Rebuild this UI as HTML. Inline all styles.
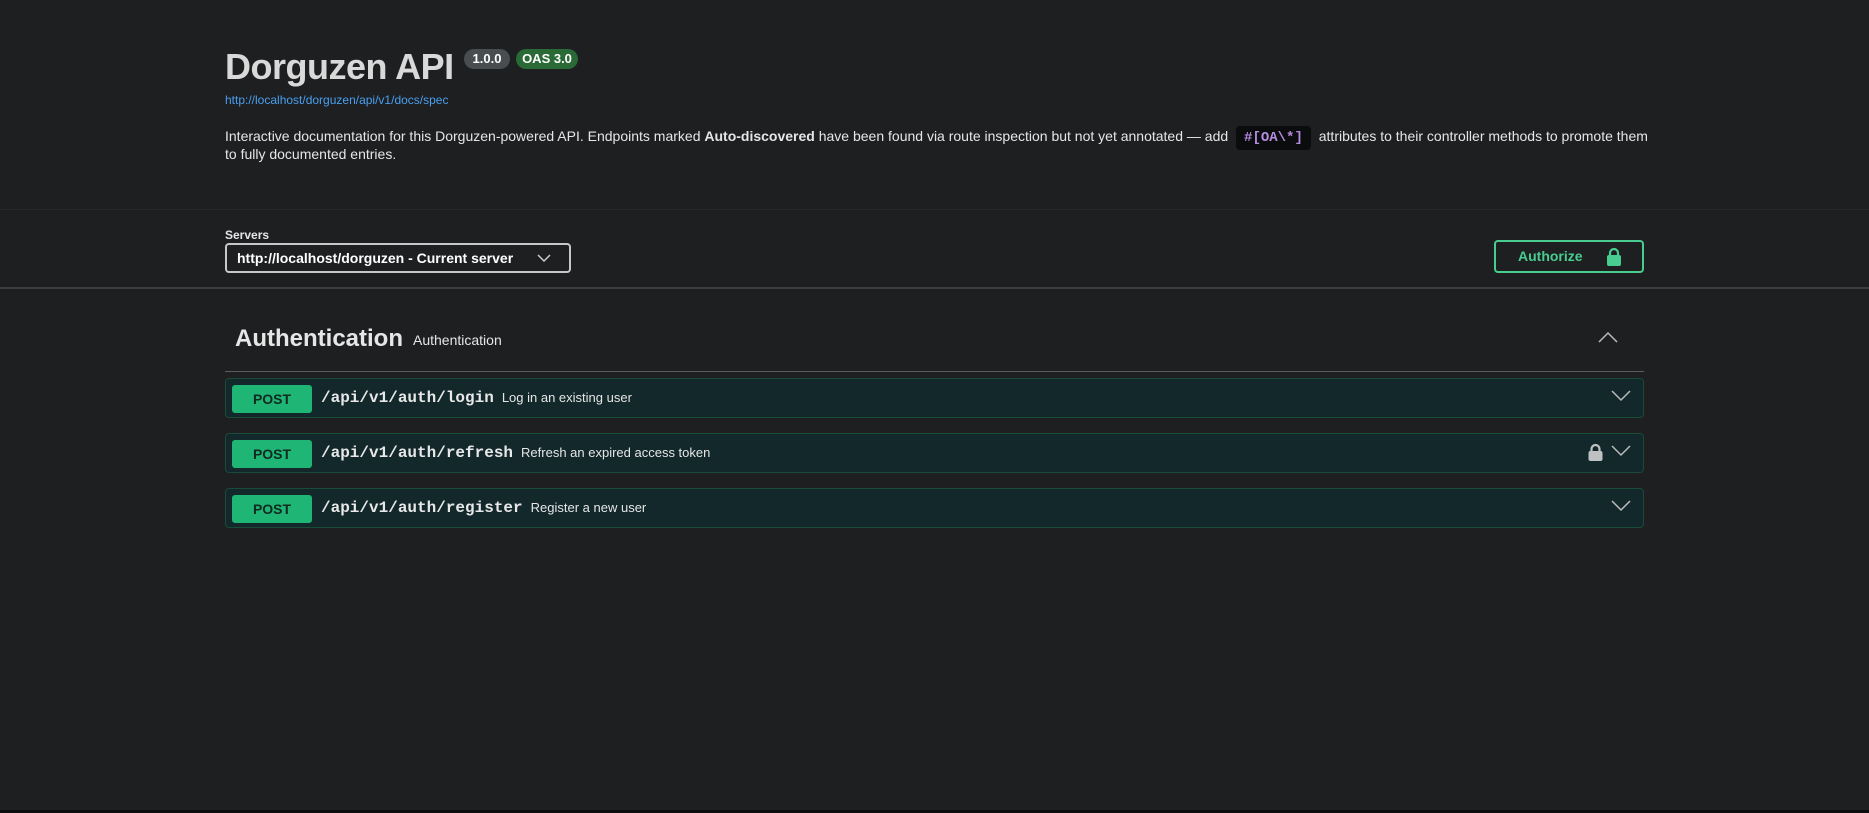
<!DOCTYPE html>
<html><head><meta charset="utf-8"><style>
*{margin:0;padding:0;box-sizing:border-box}
body{width:1869px;height:813px;background:#1d1f21;font-family:"Liberation Sans",Arial,sans-serif;color:#e6e6e6;position:relative;overflow:hidden}
.a{position:absolute}
.title{left:225px;top:46px;font-size:36px;font-weight:bold;color:#d9d9d9;letter-spacing:-0.5px}
.badge{top:49px;height:20px;border-radius:10px;font-size:13px;font-weight:bold;color:#fff;line-height:20px;text-align:center}
.link{left:225px;top:93px;font-size:12px;color:#4a9ff0}
.desc{left:225px;top:128px;width:1430px;font-size:14px;line-height:16px;color:#e6e6e6}
.code{display:inline-block;background:#0b0c0e;color:#b58ce0;font-family:"Liberation Mono",monospace;font-weight:bold;font-size:14px;padding:0 8px;border-radius:4px;margin:0 4px;line-height:16px;box-shadow:0 -4px 0 #0b0c0e,0 4px 0 #0b0c0e}
.row{left:225px;width:1419px;height:40px;background:#12282a;border:1px solid #1a4a38;border-radius:4px}
.post{position:absolute;left:6px;top:6px;width:80px;height:28px;background:#1fb574;border-radius:3px;color:#0f2a20;font-weight:bold;font-size:14px;text-align:center;line-height:28px}
.path{position:absolute;left:95px;top:9px;font-family:"Liberation Mono",monospace;font-weight:bold;font-size:16px;color:#e8e8e8;line-height:20px}
.sum{font-family:"Liberation Sans",sans-serif;font-weight:normal;font-size:13px;margin-left:8px;color:#e6e6e6}
.chev{position:absolute;right:12px;top:11px}
</style></head><body>
<div class="a" style="left:0;top:209px;width:1869px;height:1px;background:#25282b"></div>
<div class="a title">Dorguzen API</div>
<div class="a badge" style="left:464px;width:46px;background:#4a4d50">1.0.0</div>
<div class="a badge" style="left:516px;width:62px;background:#2a6a37">OAS 3.0</div>
<div class="a link">http://localhost/dorguzen/api/v1/docs/spec</div>
<div class="a desc">Interactive documentation for this Dorguzen-powered API. Endpoints marked <b>Auto-discovered</b> have been found via route inspection but not yet annotated — add <span class="code">#[OA\*]</span> attributes to their controller methods to promote them to fully documented entries.</div>

<div class="a" style="left:225px;top:228px;font-size:12px;font-weight:bold;color:#e6e6e6">Servers</div>
<div class="a" style="left:225px;top:243px;width:346px;height:30px;border:2px solid #c8c8c8;border-radius:4px;font-size:14px;font-weight:bold;line-height:26px;padding-left:10px;color:#fff">http://localhost/dorguzen - Current server
<svg style="position:absolute;right:18px;top:9px" width="14" height="8" viewBox="0 0 14 8"><path d="M1 1l6 6 6-6" fill="none" stroke="#ccc" stroke-width="1.5"/></svg></div>
<div class="a" style="left:1494px;top:240px;width:150px;height:33px;border:2px solid #49cc90;border-radius:4px;font-size:14px;font-weight:bold;color:#49cc90;line-height:29px;padding-left:22px">Authorize
<svg style="position:absolute;left:110px;top:5px" width="16" height="20" viewBox="0 0 16 20"><path d="M4 9V6a4 4 0 0 1 8 0v3" fill="none" stroke="#49cc90" stroke-width="2.2"/><rect x="1" y="8" width="14" height="11" rx="2" fill="#49cc90"/></svg></div>
<div class="a" style="left:0;top:287px;width:1869px;height:2px;background:#3b3e41"></div>

<div class="a" style="left:235px;top:325px;font-size:24px;font-weight:bold;color:#e6e6e6">Authentication</div>
<div class="a" style="left:413px;top:332px;font-size:14px;color:#e6e6e6">Authentication</div>
<svg class="a" style="left:1598px;top:331px" width="20" height="12" viewBox="0 0 20 12"><path d="M1 11l9-9 9 9" fill="none" stroke="#bbb" stroke-width="1.5"/></svg>
<div class="a" style="left:225px;top:371px;width:1419px;height:1px;background:#5a5d60"></div>

<div class="a row" style="top:378px"><div class="post">POST</div><div class="path">/api/v1/auth/login<span class="sum">Log in an existing user</span></div>
<svg class="chev" width="20" height="12" viewBox="0 0 20 12"><path d="M1 1l9 9 9-9" fill="none" stroke="#bbb" stroke-width="1.5"/></svg></div>
<div class="a row" style="top:433px"><div class="post">POST</div><div class="path">/api/v1/auth/refresh<span class="sum">Refresh an expired access token</span></div>
<svg style="position:absolute;right:40px;top:9px" width="15" height="19" viewBox="0 0 15 19"><path d="M3.5 9V6a4 4 0 0 1 8 0v3" fill="none" stroke="#bfc1c3" stroke-width="2.2"/><rect x="0.5" y="8" width="14" height="10" rx="2" fill="#bfc1c3"/></svg>
<svg class="chev" width="20" height="12" viewBox="0 0 20 12"><path d="M1 1l9 9 9-9" fill="none" stroke="#bbb" stroke-width="1.5"/></svg></div>
<div class="a row" style="top:488px"><div class="post">POST</div><div class="path">/api/v1/auth/register<span class="sum">Register a new user</span></div>
<svg class="chev" width="20" height="12" viewBox="0 0 20 12"><path d="M1 1l9 9 9-9" fill="none" stroke="#bbb" stroke-width="1.5"/></svg></div>
<div class="a" style="left:0;top:810px;width:1869px;height:3px;background:#0c0d0e"></div>
</body></html>
